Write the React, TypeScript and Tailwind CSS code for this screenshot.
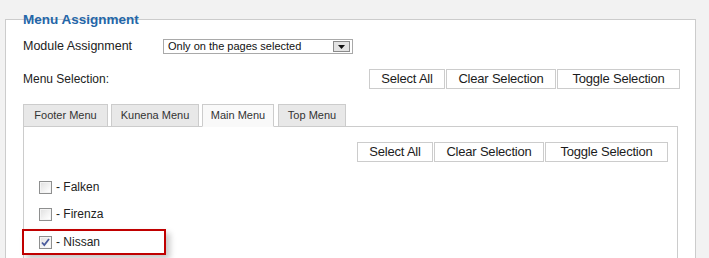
import React from "react";

const font = { fontFamily: '"Liberation Sans", Arial, sans-serif' };

function SelBtn({ w, label }: { w: string; label: string }) {
  return (
    <button
      className={`${w} h-[20px] border border-[#cccccc] bg-white text-[13px] leading-[18px] text-[#1c1c1c] tracking-[-0.2px]`}
    >
      {label}
    </button>
  );
}

function ButtonGroup() {
  return (
    <div className="flex gap-[1px]">
      <SelBtn w="w-[76px]" label="Select All" />
      <SelBtn w="w-[110px]" label="Clear Selection" />
      <SelBtn w="w-[123px]" label="Toggle Selection" />
    </div>
  );
}

function Check({ checked }: { checked?: boolean }) {
  return (
    <span className="flex h-[13px] w-[13px] items-center justify-center border border-[#8e8f8f] bg-gradient-to-br from-[#dcdcdc] to-[#fafafa]">
      <span className="flex h-[11px] w-[11px] items-center justify-center border border-[#f4f4f4] bg-gradient-to-br from-[#e2e2e2] to-[#ffffff]">
        {checked && (
          <svg width="9" height="9" viewBox="0 0 9 9">
            <path d="M1 4.5 L3.3 7 L8 1" fill="none" stroke="#4a5b9c" strokeWidth="1.8" />
          </svg>
        )}
      </span>
    </span>
  );
}

const tabs = [
  { label: "Footer Menu", w: "w-[85px]", active: false },
  { label: "Kunena Menu", w: "w-[88px]", active: false },
  { label: "Main Menu", w: "w-[72px]", active: true },
  { label: "Top Menu", w: "w-[68px]", active: false },
];

export default function App() {
  return (
    <div className="h-[258px] w-[709px] overflow-hidden bg-[#f2f2f2] pl-[5px] pt-[19px]" style={font}>
      <div className="relative h-[300px] w-[691px] border border-[#cccccc] bg-white px-[17px] pt-[19px]">
        {/* legend: only the lower half is painted white, so it cuts the border line */}
        <span className="absolute left-[16px] top-[-9px] bg-[linear-gradient(to_bottom,transparent_9px,#ffffff_9px)] px-[1px] text-[13.5px] font-bold leading-[18px] text-[#2466a8]">
          Menu Assignment
        </span>

        <div className="flex h-[15px] items-center text-[12.5px] text-[#222]">
          <span className="w-[140px]">Module Assignment</span>
          <div className="flex h-[15px] w-[190px] items-center justify-between border border-[#a9a9a9] pl-[4px] pr-[2px]">
            <span className="text-[11px] leading-[13px] text-[#111]">Only on the pages selected</span>
            <span className="flex h-[11px] w-[17px] items-end justify-center border border-[#8a8a8a] bg-[#e3e3e3] pb-[2px]">
              <svg width="7" height="4" viewBox="0 0 7 4">
                <path d="M0 0 L7 0 L3.5 4 Z" fill="#111" />
              </svg>
            </span>
          </div>
        </div>

        <div className="mt-[15px] flex h-[20px] items-center justify-between text-[12px] text-[#222]">
          <span>Menu Selection:</span>
          <div className="-mr-[2px]">
            <ButtonGroup />
          </div>
        </div>

        <div className="mt-[15px] flex">
          {tabs.map((t, i) => (
            <div
              key={t.label}
              className={`${t.w} ${i === 0 ? "" : i === 3 ? "ml-[4px]" : "ml-[3px]"} relative flex h-[23px] items-center justify-center border border-[#cccccc] text-[11px] text-[#333] ${
                t.active ? "z-10 border-b-[#f9f9f9] bg-[#f9f9f9]" : "bg-[#e8e8e8]"
              }`}
            >
              {t.label}
            </div>
          ))}
        </div>

        <div className="-mt-px h-[200px] border border-[#cccccc] bg-white pl-[15px] pr-[9px] pt-[15px]">
          <div className="flex justify-end">
            <ButtonGroup />
          </div>

          <div className="mt-[12px] flex h-[26px] items-center gap-[4px] text-[12px] text-[#222]">
            <Check />
            <span>- Falken</span>
          </div>
          <div className="mt-[1px] flex h-[26px] items-center gap-[4px] text-[12px] text-[#222]">
            <Check />
            <span>- Firenza</span>
          </div>
          <div className="-ml-[17px] mt-[2px] flex h-[26px] w-[144px] items-center gap-[4px] border-2 border-[#c00000] pl-[15px] text-[12px] text-[#222] shadow-[4px_4px_6px_rgba(0,0,0,0.22)]">
            <Check checked />
            <span>- Nissan</span>
          </div>
        </div>
      </div>
    </div>
  );
}
